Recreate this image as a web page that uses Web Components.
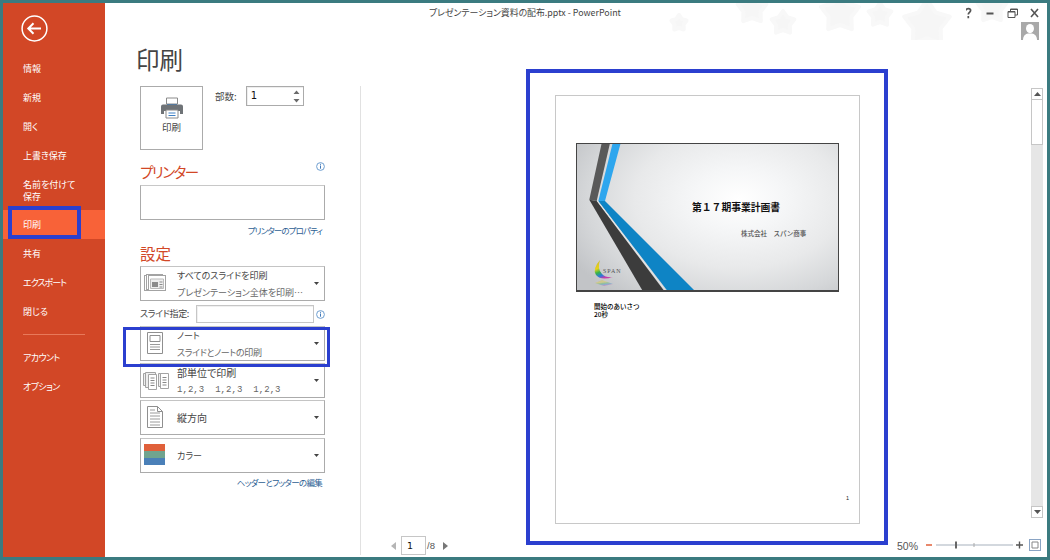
<!DOCTYPE html>
<html lang="ja">
<head>
<meta charset="utf-8">
<title>PowerPoint 印刷</title>
<style>
  html, body { margin: 0; padding: 0; background: #fff; }
  body { font-family: "Noto Sans CJK JP", "Liberation Sans", sans-serif; }
</style>
</head>
<body>
<pp-window>
  <pp-nav slot="nav">
    <nav-item>情報</nav-item>
    <nav-item>新規</nav-item>
    <nav-item>開く</nav-item>
    <nav-item>上書き保存</nav-item>
    <nav-item tall>名前を付けて<br>保存</nav-item>
    <nav-item selected>印刷</nav-item>
    <nav-item>共有</nav-item>
    <nav-item style="letter-spacing:-1px">エクスポート</nav-item>
    <nav-item>閉じる</nav-item>
    <nav-rule></nav-rule>
    <nav-item style="letter-spacing:-.6px">アカウント</nav-item>
    <nav-item style="letter-spacing:-.6px">オプション</nav-item>
  </pp-nav>
  <pp-titlebar slot="title">プレゼンテーション資料の配布.pptx - PowerPoint</pp-titlebar>
  <print-panel slot="panel"></print-panel>
  <print-preview slot="preview"></print-preview>
  <pp-mark slot="marks" style="left:8px;top:206px;width:73px;height:33px;border-width:4px"></pp-mark>
  <pp-mark slot="marks" style="left:123px;top:327px;width:207px;height:40px;border-width:3px"></pp-mark>
  <pp-mark slot="marks" style="left:526px;top:69px;width:362px;height:476px;border-width:4px"></pp-mark>
</pp-window>

<script>
// small helper so every element below stays a few lines
function shadow(el, html) {
  el.attachShadow({ mode: "open" }).innerHTML = html;
}

class PpWindow extends HTMLElement {
  constructor() {
    super();
    shadow(this, `
      <style>
        :host {
          display: flex;
          position: relative;
          box-sizing: border-box;
          width: 1050px;
          height: 560px;
          overflow: hidden;
          border: 3px solid #3b7b80;
          background: #fff;
        }
        .main { flex: 1; min-width: 0; display: flex; flex-direction: column; }
        .body { flex: 1; min-height: 0; display: flex; }
      </style>
      <slot name="nav"></slot>
      <div class="main">
        <slot name="title"></slot>
        <div class="body">
          <slot name="panel"></slot>
          <slot name="preview"></slot>
        </div>
      </div>
      <slot name="marks"></slot>
    `);
  }
}

class PpMark extends HTMLElement {
  constructor() {
    super();
    // coordinates come in as page pixels, the window border is 3px
    shadow(this, `
      <style>
        :host {
          position: absolute;
          box-sizing: border-box;
          margin: -3px 0 0 -3px;
          border: 3px solid #2b3fcf;
          pointer-events: none;
        }
      </style>
    `);
  }
}

class PpNav extends HTMLElement {
  constructor() {
    super();
    shadow(this, `
      <style>
        :host {
          display: flex;
          flex-direction: column;
          flex: none;
          width: 102px;
          background: #d24726;
        }
        .back { display: block; margin: 12px 0 12px 18px; }
      </style>
      <svg class="back" width="27" height="27" viewBox="0 0 27 27" fill="none" stroke="#fff">
        <circle cx="13.5" cy="13.5" r="12.4" stroke-width="1.5"/>
        <path d="M7.5 13.5H20M12.5 8.3l-5.2 5.2 5.2 5.2" stroke-width="2"/>
      </svg>
      <slot></slot>
    `);
  }
}

class NavItem extends HTMLElement {
  constructor() {
    super();
    shadow(this, `
      <style>
        :host {
          display: flex;
          align-items: center;
          box-sizing: border-box;
          height: 29px;
          padding-left: 20px;
          color: #fff;
          font: 9px/12px "Noto Sans CJK JP", "Liberation Sans", sans-serif;
          font-feature-settings: "palt" 1;
        }
        :host([tall]) { height: 40px; padding-top: 1px; }
        :host([selected]) { background: #f86238; }
      </style>
      <span><slot></slot></span>
    `);
  }
}

class NavRule extends HTMLElement {
  constructor() {
    super();
    shadow(this, `
      <style>
        :host {
          display: block;
          height: 1px;
          margin: 8px 20px 8px 20px;
          width: 62px;
          background: #e8795a;
        }
      </style>
    `);
  }
}

class PpTitlebar extends HTMLElement {
  constructor() {
    super();
    const stars = [[679, 23, 8], [752, 9, 15], [783, 23, 12], [840, 13, 20], [880, 15, 12], [927, 24, 24], [992, 8, 15]]
      .map(([x, y, r]) => {
        let pts = "";
        for (let i = 0; i < 10; i++) {
          const rad = i % 2 ? r * 0.6 : r;
          const a = -Math.PI / 2 + i * Math.PI / 5;
          pts += `${(x - 105 + rad * Math.cos(a)).toFixed(1)},${(y - 3 + rad * Math.sin(a)).toFixed(1)} `;
        }
        return `<polygon points="${pts}"/>`;
      }).join("");
    shadow(this, `
      <style>
        :host {
          display: flex;
          position: relative;
          flex: none;
          height: 42px;
          font: 8.900px/20px "Noto Sans CJK JP", "Liberation Sans", sans-serif;
          font-feature-settings: "palt" 1;
          color: #444;
        }
        .stars { position: absolute; left: 0; top: 0; }
        .name { position: relative; margin-left: 324px; }
        .right {
          position: relative;
          display: flex;
          flex-direction: column;
          align-items: flex-end;
          margin-left: auto;
          padding: 3px 7px 0 0;
        }
        .account { display: block; margin: 2px 1px 0 0; }
      </style>
      <svg class="stars" width="942" height="37" fill="#f6f6f6" stroke="#f8f8f8" stroke-width="4" stroke-linejoin="round">${stars}</svg>
      <span class="name"><slot></slot></span>
      <div class="right">
        <svg width="74" height="14" viewBox="0 0 74 14" fill="none" stroke="#555">
          <path d="M0 4.500c.3-2.600 4.600-2.600 4.600 0 0 1.900-2.300 1.800-2.300 4M2.300 10v2.200" stroke-width="1.700"/>
          <path d="M20.500 7.500h7" stroke-width="2"/>
          <path d="M42 5.500h7v6h-7zM44.500 5.500V3h7v6H49" stroke-width="1"/><path d="M42 6h7M44.500 3.500h7" stroke-width="1"/>
          <path d="M65 3l7 8M72 3l-7 8" stroke-width="1.600"/>
        </svg>
        <svg class="account" width="18" height="18" viewBox="0 0 18 18">
          <rect width="18" height="18" fill="#a9a9a9"/>
          <ellipse cx="9" cy="6.600" rx="4" ry="4.600" fill="#fff"/>
          <path d="M2 18c0-4 2.500-6 5-6.400h4c2.500.4 5 2.400 5 6.400z" fill="#fff"/>
        </svg>
      </div>
    `);
  }
}

class PrintPanel extends HTMLElement {
  constructor() {
    super();
    shadow(this, `
      <style>
        :host {
          display: flex;
          flex-direction: column;
          flex: none;
          width: 256px;
          font: 9.500px/14px "Noto Sans CJK JP", "Liberation Sans", sans-serif;
          font-feature-settings: "palt" 1;
          color: #444;
        }
        h1 {
          margin: 0;
          height: 41px;
          padding-left: 31px;
          font: 400 23.500px/28px "Noto Sans CJK JP", sans-serif;
          color: #444;
          box-sizing: border-box;
        }
        .controls {
          flex: 1;
          box-sizing: border-box;
          padding-left: 35px;
          border-right: 1px solid #e1e1e1;
          margin-bottom: 2px;
        }
        .inner { width: 185px; display: flex; flex-direction: column; }
        .top { display: flex; height: 64px; }
        .printbtn {
          box-sizing: border-box;
          width: 63px;
          height: 64px;
          border: 1px solid #ababab;
          display: flex;
          flex-direction: column;
          align-items: center;
          padding-top: 10px;
        }
        .printbtn svg { display: block; margin-bottom: 1px; }
        .copies { display: flex; align-items: flex-start; margin-left: 12px; }
        .copies span { line-height: 20px; margin-right: 9px; }
        .spin {
          box-sizing: border-box;
          display: flex;
          justify-content: space-between;
          width: 58px;
          height: 20px;
          border: 1px solid #ababab;
          box-shadow: inset 1px 1px 0 #eee;
          padding: 0 2px 0 4px;
          font: 10px/18px "DejaVu Sans", sans-serif;
          color: #111;
        }
        .spin svg { margin-top: 2px; }
        h2 {
          display: flex;
          justify-content: space-between;
          margin: 0;
          height: 20px;
          font: 400 15.500px/20px "Noto Sans CJK JP", sans-serif;
          font-feature-settings: "palt" 1;
          color: #d24726;
        }
        .printer { margin-top: 12px; font-size: 14.500px; letter-spacing: -1.500px; }
        .box {
          box-sizing: border-box;
          height: 35px;
          margin-top: 3px;
          border: 1px solid #ababab;
          border-top-color: #c8c8c8;
        }
        a {
          display: block;
          height: 15px;
          text-align: right;
          padding-right: 3px;
          color: #2d5e93;
          line-height: 20px;
          text-decoration: none;
          font-size: 8.500px;
          letter-spacing: -.9px;
        }
        .settings { margin-top: 8px; margin-bottom: 3px; }
        .range { display: flex; align-items: center; height: 18px; margin: 2px 0 1px; font-size: 9px; letter-spacing: -.35px; }
        .range .field {
          box-sizing: border-box;
          width: 118px;
          height: 18px;
          margin-left: auto;
          border: 1px solid #c6c6c6;
          box-shadow: inset 1px 1px 0 #f0f0f0;
        }
        .range info-dot { margin-left: 2px; }
        .drops { display: flex; flex-direction: column; gap: 2px; }
      </style>
      <h1>印刷</h1>
      <div class="controls"><div class="inner">
        <div class="top">
          <div class="printbtn">
            <svg width="24" height="22" viewBox="0 0 24 22">
              <path d="M6.500 1h11v6h-11z" fill="#fff" stroke="#8a8a8a"/>
              <path d="M7 7h10v1.500H7z" fill="#3e80c4"/>
              <path d="M1 9.500q0-2 2-2h18q2 0 2 2V17h-3v-3H4v3H1z" fill="#6f7377"/>
              <path d="M6 13h12v8H6z" fill="#fff" stroke="#8a8a8a"/>
              <path d="M8.500 16h7M8.500 18.500h7" stroke="#3e80c4"/>
            </svg>
            印刷
          </div>
          <div class="copies">
            <span>部数:</span>
            <div class="spin">1
              <svg width="9" height="15" viewBox="0 0 9 15" fill="#6a6a6a"><path d="M1.500 5l3-3.500 3 3.500zM1.500 10l3 3.500 3-3.500z"/></svg>
            </div>
          </div>
        </div>
        <h2 class="printer">プリンター<info-dot></info-dot></h2>
        <div class="box"></div>
        <a>プリンターのプロパティ</a>
        <h2 class="settings">設定</h2>
        <div class="drops">
          <setting-drop two icon="slides">すべてのスライドを印刷<span slot="sub">プレゼンテーション全体を印刷…</span></setting-drop>
          <div class="range">スライド指定:<div class="field"></div><info-dot></info-dot></div>
          <setting-drop two icon="notes">ノート<span slot="sub" style="letter-spacing:-.35px">スライドとノートの印刷</span></setting-drop>
          <setting-drop two icon="collate"><span style="font-size:10px">部単位で印刷</span><span slot="sub" style="font:9px/17px 'Liberation Mono',monospace;letter-spacing:.05px;white-space:pre">1,2,3  1,2,3  1,2,3</span></setting-drop>
          <setting-drop icon="portrait" style="font-size:10px">縦方向</setting-drop>
          <setting-drop icon="color" style="margin-top:1px">カラー</setting-drop>
        </div>
        <a style="height:20px;margin-top:-1px;letter-spacing:-.7px">ヘッダーとフッターの編集</a>
      </div></div>
    `);
  }
}

class InfoDot extends HTMLElement {
  constructor() {
    super();
    shadow(this, `
      <style>:host { display: inline-block; flex: none; width: 9px; height: 9px; line-height: 0; }</style>
      <svg width="9" height="9" viewBox="0 0 9 9" fill="none" stroke="#6f9fd0">
        <circle cx="4.500" cy="4.500" r="3.900"/><path d="M4.500 3.500v3.200M4.500 1.800v1" stroke="#3f78b8"/>
      </svg>
    `);
  }
}

const DROP_ICONS = {
  slides: `<g fill="#fff" stroke="#a3a3a3"><rect x="3.500" y="8.500" width="15" height="15"/><rect x="5.500" y="7.500" width="16" height="15"/><rect x="7.500" y="8.500" width="17" height="15"/></g>
    <path d="M9.500 12h13v9.500h-13z" fill="#eee" stroke="#bbb"/><path d="M11 15h6v5h-6z" fill="#8b8b8b"/><path d="M18.500 15h3M18.500 17.500h3M18.500 20h3" stroke="#8b8b8b"/>`,
  notes: `<path d="M6.500 5.500h15v21h-15z" fill="#fff" stroke="#8f8f8f"/><path d="M9 8.500h10v6H9z" fill="#fff" stroke="#8f8f8f"/><path d="M9 17.500h10M9 20h10M9 22.500h10" stroke="#9a9a9a"/>`,
  collate: `<g fill="#eee" stroke="#a3a3a3"><path d="M2.500 9.500h9v12h-9z"/><path d="M4.500 8.500h10v15h-10z"/><path d="M7.500 10.500h8v15h-8z" fill="#fff"/><path d="M17.500 9.500h8v13h-8z"/><path d="M19.500 9.500h8v15h-8z" fill="#fff"/></g>
    <path d="M9.500 14h4M9.500 16.500h4M9.500 19h4M9.500 21.500h4M21.500 13.500h4M21.500 16h4M21.500 18.500h4M21.500 21h4" stroke="#888"/>`,
  portrait: `<path d="M6.500 5.500h10l5 5v16h-15z" fill="#fff" stroke="#8f8f8f"/><path d="M16.500 5.500v5h5" fill="none" stroke="#8f8f8f"/><path d="M9 9h5M9 12h10M9 15h10M9 18h10M9 21h10M9 24h10" stroke="#9a9a9a"/>`,
  color: `<rect x="3" y="5" width="21" height="8" fill="#e0603a"/><rect x="3" y="12" width="21" height="7" fill="#70a48f"/><rect x="3" y="19" width="21" height="7" fill="#4a80b8"/>`,
};

class SettingDrop extends HTMLElement {
  constructor() {
    super();
    const icon = DROP_ICONS[this.getAttribute("icon")] || "";
    shadow(this, `
      <style>
        :host {
          display: flex;
          align-items: center;
          box-sizing: border-box;
          height: 35px;
          border: 1px solid #ababab;
          border-top-color: #c4c4c4;
          font: 9px/17px "Noto Sans CJK JP", "Liberation Sans", sans-serif;
          font-feature-settings: "palt" 1;
          color: #444;
        }
        svg.ico { flex: none; width: 36px; height: 33px; }
        .text { flex: 1; display: flex; flex-direction: column; color: #444; }
        :host([two]) .text { margin-top: 1px; }
        ::slotted([slot="sub"]) { color: #666; }
        svg.arrow { flex: none; margin: 0 5px 0 0; }
      </style>
      <svg class="ico" viewBox="0 0 36 33">${icon}</svg>
      <div class="text"><span><slot></slot></span><slot name="sub"></slot></div>
      <svg class="arrow" width="5" height="3" viewBox="0 0 5 3" fill="#444"><path d="M0 0h5L2.500 3z"/></svg>
    `);
  }
}

class PrintPreview extends HTMLElement {
  constructor() {
    super();
    shadow(this, `
      <style>
        :host {
          display: flex;
          flex-direction: column;
          flex: 1;
          min-width: 0;
        }
        .view { flex: 1; min-height: 0; display: flex; }
        .stage { flex: 1; padding: 50px 0 0 194px; }
        .foot { flex: none; height: 21px; display: flex; align-items: flex-start; }
        page-nav { margin-left: 30px; }
        zoom-bar { margin-left: auto; }
      </style>
      <div class="view">
        <div class="stage"><preview-sheet></preview-sheet></div>
        <scroll-rail></scroll-rail>
      </div>
      <div class="foot">
        <page-nav></page-nav>
        <zoom-bar></zoom-bar>
      </div>
    `);
  }
}

class PreviewSheet extends HTMLElement {
  constructor() {
    super();
    shadow(this, `
      <style>
        :host {
          display: flex;
          flex-direction: column;
          box-sizing: border-box;
          width: 305px;
          height: 429px;
          border: 1px solid #c8c8c8;
          font-family: "Noto Sans CJK JP", "Liberation Sans", sans-serif;
          font-feature-settings: "palt" 1;
        }
        slide-thumb { margin: 47px 0 0 20px; }
        .notes { margin: 10px 0 0 38px; font: 500 6.500px/8px "Noto Sans CJK JP", sans-serif; color: #000; }
        .num { margin: auto 10px 21px auto; font: 5.500px/7px "Liberation Sans", sans-serif; color: #222; }
      </style>
      <slide-thumb></slide-thumb>
      <div class="notes">開始のあいさつ<br>20秒</div>
      <div class="num">1</div>
    `);
  }
}

class SlideThumb extends HTMLElement {
  constructor() {
    super();
    shadow(this, `
      <style>
        :host {
          display: block;
          position: relative;
          box-sizing: border-box;
          width: 263px;
          height: 149px;
          overflow: hidden;
          border: solid #444;
          border-width: 1px 1px 2px 1px;
          background: radial-gradient(ellipse 190px 125px at 62% 38%, #fff 0%, #f5f6f7 25%, #e8e9ea 55%, #d5d7d9 80%, #c2c4c7 100%);
        }
        svg { position: absolute; left: -1px; top: -1px; }
        .head, .co, .logo { position: absolute; white-space: nowrap; }
        .head { left: 115px; top: 55px; font: 700 9.800px/16px "Noto Sans CJK JP", sans-serif; color: #111; }
        .co { left: 164px; top: 84px; font: 500 6.500px/10px "Noto Sans CJK JP", sans-serif; color: #555; }
        .logo { left: 26px; top: 123px; font: 6px/8px "Liberation Serif", serif; letter-spacing: .9px; color: #555; }
      </style>
      <svg width="263" height="149" viewBox="0 0 263 149">
        <defs>
          <linearGradient id="sw" x1="0" y1="0" x2="0.4" y2="1">
            <stop offset="0" stop-color="#c9b52a"/><stop offset=".45" stop-color="#e8d21c"/>
            <stop offset=".65" stop-color="#35b34a"/><stop offset=".85" stop-color="#2a78e0"/><stop offset="1" stop-color="#c83aa8"/>
          </linearGradient>
        </defs>
        <path d="M25.700 0H34L20.700 58l-7.400-1.300z" fill="#595959"/>
        <path d="M13.300 56.700l7.400 1.300L89 149H67.300z" fill="#3c3c3c"/>
        <path d="M36.700 0h8L29 58h-6.700z" fill="#2ea6ee"/>
        <path d="M22.300 58H29L120 149H92.300z" fill="#0e84c5"/>
        <path d="M21.500 58L90.600 149" stroke="#e4e4e4" stroke-width="1" fill="none"/>
        <path d="M24 117q-8 9-4 15 5 6 17 2-7 1-11-3-5-5-2-14z" fill="url(#sw)"/>
        <path d="M19 140l7-3 11 4-9 2z" fill="url(#sw)" opacity=".35"/>
      </svg>
      <span class="head">第１７期事業計画書</span>
      <span class="co">株式会社　スパン商事</span>
      <span class="logo">SPAN</span>
    `);
  }
}

class ScrollRail extends HTMLElement {
  constructor() {
    super();
    shadow(this, `
      <style>
        :host {
          display: flex;
          flex-direction: column;
          flex: none;
          box-sizing: border-box;
          width: 12px;
          height: 430px;
          margin: 43px 4px 0 0;
          background: #e6e6e6;
        }
        .btn {
          flex: none;
          box-sizing: border-box;
          height: 12px;
          background: #fff;
          border: 1px solid #c6c6c6;
          display: flex;
          align-items: center;
          justify-content: center;
        }
        .thumb { flex: none; box-sizing: border-box; height: 45px; background: #fff; border: 1px solid #c6c6c6; border-top: 0; }
        .gap { flex: 1; }
      </style>
      <div class="btn"><svg width="7" height="4" viewBox="0 0 7 4" fill="#555"><path d="M0 4h7L3.500 0z"/></svg></div>
      <div class="thumb"></div>
      <div class="gap"></div>
      <div class="btn"><svg width="7" height="4" viewBox="0 0 7 4" fill="#555"><path d="M0 0h7L3.500 4z"/></svg></div>
    `);
  }
}

class PageNav extends HTMLElement {
  constructor() {
    super();
    shadow(this, `
      <style>
        :host {
          display: flex;
          align-items: center;
          height: 19px;
          font: 9.500px/19px "Liberation Sans", sans-serif;
          color: #555;
        }
        .field {
          box-sizing: border-box;
          width: 25px;
          height: 19px;
          margin: 0 1px 0 5px;
          padding-left: 5px;
          border: 1px solid #c6c6c6;
          color: #111;
          font: 9.500px/17px "DejaVu Sans", sans-serif;
        }
        svg.next { margin-left: 8px; }
      </style>
      <svg width="5" height="8" viewBox="0 0 5 8" fill="#b5b5b5"><path d="M5 0v8L0 4z"/></svg>
      <div class="field">1</div>/8
      <svg class="next" width="5" height="8" viewBox="0 0 5 8" fill="#777"><path d="M0 0v8l5-4z"/></svg>
    `);
  }
}

class ZoomBar extends HTMLElement {
  constructor() {
    super();
    shadow(this, `
      <style>
        :host {
          display: flex;
          align-items: center;
          height: 20px;
          padding-right: 5px;
          font: 10.500px/20px "Liberation Sans", sans-serif;
          color: #555;
        }
        svg { margin: -2px 0 0 8px; }
      </style>
      <span>50%</span>
      <svg width="116" height="14" viewBox="0 0 116 14" fill="none">
        <path d="M0 7h6" stroke="#e0603a" stroke-width="1.500"/>
        <path d="M10 7h77" stroke="#c4cbd3" stroke-width="1.500"/>
        <path d="M30 3.500v7" stroke="#666" stroke-width="2"/>
        <path d="M48 5v4" stroke="#aaa"/>
        <path d="M90 7h7M93.500 3.500v7" stroke="#555" stroke-width="1.400"/>
        <rect x="103.500" y="1.500" width="11" height="11" stroke="#8aa4c4"/>
        <path d="M106 4h6v6h-6z" stroke="#888"/>
      </svg>
    `);
  }
}

customElements.define("pp-window", PpWindow);
customElements.define("pp-mark", PpMark);
customElements.define("pp-nav", PpNav);
customElements.define("nav-item", NavItem);
customElements.define("nav-rule", NavRule);
customElements.define("pp-titlebar", PpTitlebar);
customElements.define("print-panel", PrintPanel);
customElements.define("info-dot", InfoDot);
customElements.define("setting-drop", SettingDrop);
customElements.define("print-preview", PrintPreview);
customElements.define("preview-sheet", PreviewSheet);
customElements.define("slide-thumb", SlideThumb);
customElements.define("scroll-rail", ScrollRail);
customElements.define("page-nav", PageNav);
customElements.define("zoom-bar", ZoomBar);
</script>
</body>
</html>
